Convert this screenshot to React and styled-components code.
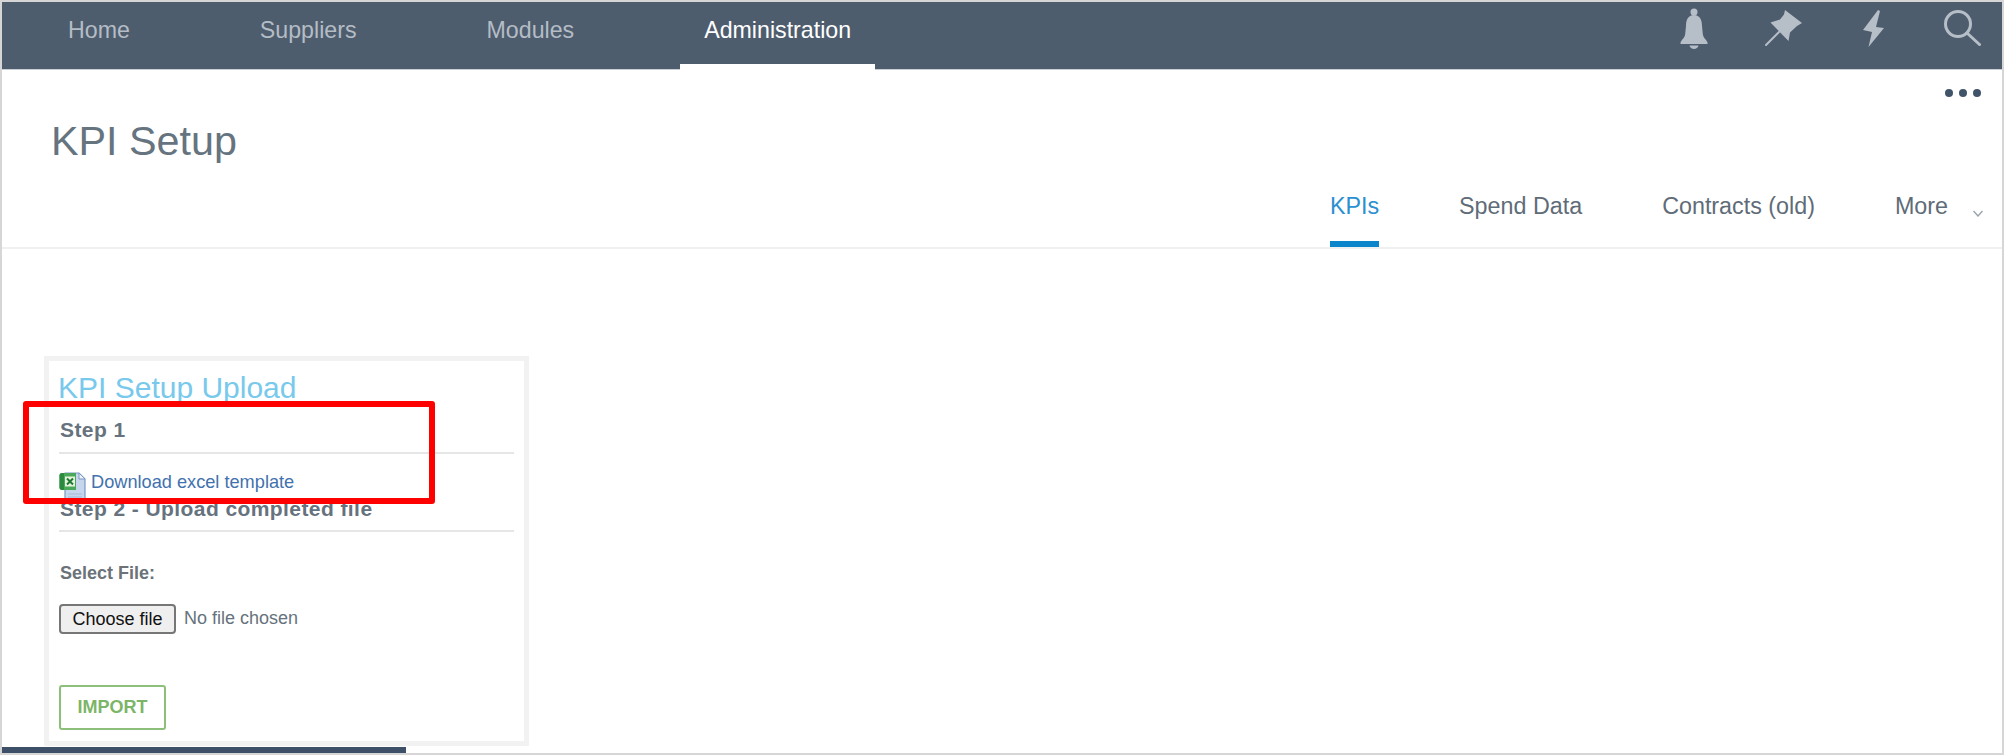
import React from 'react';
import styled, { createGlobalStyle } from 'styled-components';

const GlobalStyle = createGlobalStyle`
  html, body {
    margin: 0;
    padding: 0;
    background: #fff;
  }
  body {
    font-family: "Liberation Sans", Arial, sans-serif;
  }
`;

const Frame = styled.div`
  position: relative;
  box-sizing: border-box;
  width: 2004px;
  height: 755px;
  display: flex;
  flex-direction: column;
  border: 2px solid #d6d6d6;
  overflow: hidden;
  background: #fff;
`;

const Header = styled.header`
  flex: none;
  box-sizing: border-box;
  height: 68px;
  display: flex;
  justify-content: space-between;
  padding: 0 21px 0 42px;
  background: #4e5d6e;
  border-bottom: 1px solid #c8ced4;
`;

const Nav = styled.nav`
  display: flex;
  gap: 82px;
`;

const NavItem = styled.a`
  box-sizing: border-box;
  height: 68px;
  padding: 14px 24px 0;
  font-size: 23.2px;
  line-height: 28px;
  color: ${(p) => (p.$active ? '#ffffff' : '#b4bcc5')};
  border-bottom: 6px solid ${(p) => (p.$active ? '#ffffff' : 'transparent')};
`;

const HeaderIcons = styled.div`
  display: flex;
  align-items: center;
  padding-bottom: 15px;
`;

const HeaderIcon = styled.svg`
  display: block;
  flex: none;
  margin-left: ${(p) => p.$gap}px;
  fill: #b6bec7;
`;

const PageHead = styled.section`
  flex: none;
  box-sizing: border-box;
  height: 179px;
  display: flex;
  flex-direction: column;
  padding-top: 19px;
  border-bottom: 2px solid #eef0f2;
`;

const Dots = styled.div`
  display: flex;
  justify-content: flex-end;
  gap: 6px;
  padding-right: 21px;
`;

const Dot = styled.span`
  width: 8px;
  height: 8px;
  border-radius: 50%;
  background: #3f5469;
`;

const Title = styled.h1`
  margin: 20px 0 0;
  padding-left: 49px;
  font-size: 41.3px;
  line-height: 48px;
  font-weight: 400;
  color: #66747f;
`;

const Tabs = styled.div`
  display: flex;
  justify-content: flex-end;
  gap: 80px;
  margin-top: 27px;
  padding-right: 19px;
`;

const Tab = styled.a`
  box-sizing: border-box;
  height: 55px;
  display: flex;
  font-size: 23.3px;
  line-height: 28px;
  color: ${(p) => (p.$active ? '#2b8fd0' : '#5f6c78')};
  border-bottom: 6px solid ${(p) => (p.$active ? '#0a85cc' : 'transparent')};
`;

const Chevron = styled.svg`
  display: block;
  margin: 18px 0 0 25px;
  fill: none;
  stroke: #9aa3ac;
  stroke-width: 1.4;
`;

const Body = styled.main`
  flex: 1;
  padding: 107px 0 0 42px;
`;

const Card = styled.div`
  box-sizing: border-box;
  width: 485px;
  height: 390px;
  padding: 9px 10px 0 10px;
  border: 5px solid #f2f2f2;
`;

const CardTitle = styled.h2`
  margin: 0 0 0 -1px;
  font-size: 30px;
  line-height: 36px;
  font-weight: 400;
  color: #78c9ec;
`;

const StepHeading = styled.h3`
  margin: ${(p) => p.$top}px 0 0;
  padding: 0 0 ${(p) => p.$bottom}px 1px;
  font-size: 21px;
  line-height: 26px;
  font-weight: 700;
  letter-spacing: 0.42px;
  color: #66727d;
  border-bottom: 2px solid #e4e6e8;
`;

const DownloadRow = styled.a`
  height: 27px;
  display: flex;
  align-items: center;
  gap: 5px;
  margin-top: 15px;
  font-size: 18.2px;
  color: #4272ad;
`;

const ExcelSvg = styled.svg`
  display: block;
  flex: none;
  align-self: flex-start;
  margin-top: 3px;
`;

const FieldLabel = styled.label`
  display: block;
  margin: 30px 0 0 1px;
  font-size: 18px;
  line-height: 22px;
  font-weight: 700;
  color: #6b7278;
`;

const FileRow = styled.div`
  display: flex;
  align-items: center;
  gap: 8px;
  margin-top: 20px;
`;

const ChooseButton = styled.button`
  box-sizing: border-box;
  width: 117px;
  height: 30px;
  padding: 0;
  font-family: inherit;
  font-size: 18px;
  color: #111;
  background: #efefef;
  border: 2px solid #767676;
  border-radius: 4px;
`;

const NoFile = styled.span`
  position: relative;
  top: -1px;
  font-size: 18px;
  color: #66727d;
`;

const ImportButton = styled.button`
  display: block;
  box-sizing: border-box;
  width: 107px;
  height: 45px;
  margin-top: 51px;
  padding: 0;
  font-family: inherit;
  font-size: 18px;
  font-weight: 700;
  color: #7cb567;
  background: #fff;
  border: 2px solid #8cc07a;
  border-radius: 3px;
`;

const ScrollThumb = styled.div`
  flex: none;
  width: 404px;
  height: 6px;
  background: #3d5068;
`;

const Highlight = styled.div`
  position: absolute;
  left: 21px;
  top: 399px;
  box-sizing: border-box;
  width: 412px;
  height: 103px;
  border: 6px solid #ff0000;
  border-radius: 3px;
  pointer-events: none;
`;

function BellIcon() {
  return (
    <HeaderIcon $gap={0} width="28" height="41" viewBox="0 0 28 41">
      <circle cx="14" cy="4" r="3.5" />
      <path d="M14 7C8 7 6 12 6 18L5.200 26C4.800 30 2 31 .5 34.500V36H27.500V34.500C26 31 23.200 30 22.800 26L22 18C22 12 20 7 14 7Z" />
      <path d="M9.500 37.500H18.500C18 39.800 16.200 41 14 41C11.800 41 10 39.800 9.500 37.500Z" />
    </HeaderIcon>
  );
}

function PinIcon() {
  return (
    <HeaderIcon $gap={57} width="37" height="36" viewBox="0 0 37 36">
      <path d="M20 0L37 13L32 16L25 22.500L23.500 31L5.500 12.500L15 9.500L19 4.500Z" />
      <path d="M1 35L14 22" stroke="#b6bec7" strokeWidth="2" strokeLinecap="round" />
    </HeaderIcon>
  );
}

function BoltIcon() {
  return (
    <HeaderIcon $gap={61} width="21" height="37" viewBox="0 0 21 37">
      <path d="M15 0L0 20L9 22L5.500 37L21 18L13 17L17 1Z" />
    </HeaderIcon>
  );
}

function SearchIcon() {
  return (
    <HeaderIcon $gap={60} width="37" height="36" viewBox="0 0 37 36" style={{ fill: 'none' }}>
      <circle cx="14" cy="14" r="12.500" stroke="#b6bec7" strokeWidth="3" />
      <path d="M23 23L35.500 34.500" stroke="#b6bec7" strokeWidth="3" strokeLinecap="round" />
    </HeaderIcon>
  );
}

function ExcelIcon() {
  return (
    <ExcelSvg width="27" height="29" viewBox="0 0 27 29">
      <path d="M6 1H20L26 7V28H6Z" fill="#c6d6ec" stroke="#7a98c4" strokeWidth="1.200" />
      <path d="M20 1V7H26Z" fill="#eef3fa" stroke="#7a98c4" strokeWidth="1" />
      <path d="M9 22H23M9 25H23" stroke="#a5bbd9" strokeWidth="1" />
      <path d="M3 1H17V18H3C1.500 18 .5 17 .5 15.500V3.500C.5 2 1.500 1 3 1Z" fill="#4aa85a" />
      <path d="M3 1H5V18H3C1.500 18 .5 17 .5 15.500V3.500C.5 2 1.500 1 3 1Z" fill="#2a8a3e" />
      <rect x="6" y="4.500" width="10" height="10" fill="#e8f3df" />
      <path d="M8 6.500L14 12.500M14 6.500L8 12.500" stroke="#1d7a32" strokeWidth="2" />
    </ExcelSvg>
  );
}

const navItems = ['Home', 'Suppliers', 'Modules', 'Administration'];

export default function App() {
  return (
    <>
      <GlobalStyle />
      <Frame>
        <Header>
          <Nav>
            {navItems.map((item) => (
              <NavItem key={item} $active={item === 'Administration'}>
                {item}
              </NavItem>
            ))}
          </Nav>
          <HeaderIcons>
            <BellIcon />
            <PinIcon />
            <BoltIcon />
            <SearchIcon />
          </HeaderIcons>
        </Header>

        <PageHead>
          <Dots>
            <Dot />
            <Dot />
            <Dot />
          </Dots>
          <Title>KPI Setup</Title>
          <Tabs>
            <Tab $active>KPIs</Tab>
            <Tab>Spend Data</Tab>
            <Tab>Contracts (old)</Tab>
            <Tab>
              More
              <Chevron width="10" height="7" viewBox="0 0 10 7">
                <path d="M.5 1L5 6L9.500 1" />
              </Chevron>
            </Tab>
          </Tabs>
        </PageHead>

        <Body>
          <Card>
            <CardTitle>KPI Setup Upload</CardTitle>
            <StepHeading $top={11} $bottom={9}>Step 1</StepHeading>
            <DownloadRow>
              <ExcelIcon />
              Download excel template
            </DownloadRow>
            <StepHeading $top={0} $bottom={8}>Step 2 - Upload completed file</StepHeading>
            <FieldLabel>Select File:</FieldLabel>
            <FileRow>
              <ChooseButton>Choose file</ChooseButton>
              <NoFile>No file chosen</NoFile>
            </FileRow>
            <ImportButton>IMPORT</ImportButton>
          </Card>
        </Body>

        <ScrollThumb />
        <Highlight />
      </Frame>
    </>
  );
}
